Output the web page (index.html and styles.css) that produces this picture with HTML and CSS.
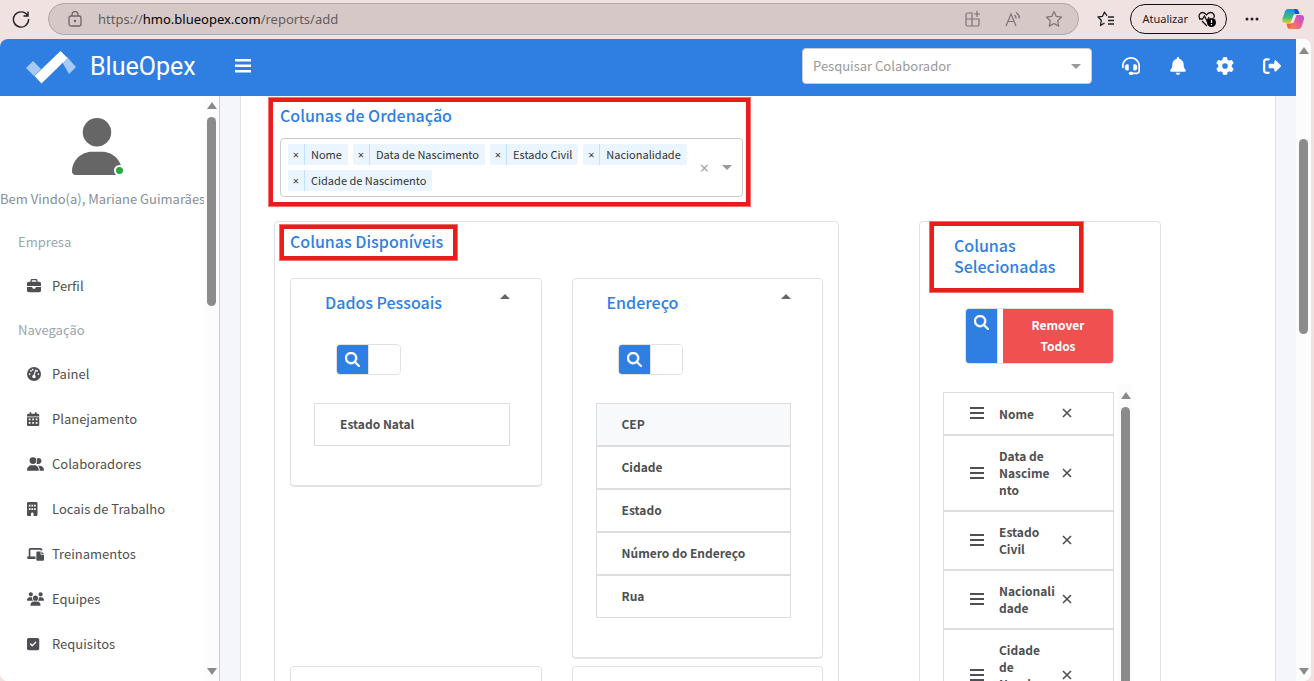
FILE: index.html
```html
<!DOCTYPE html>
<html lang="pt-BR">
<head>
  <meta charset="UTF-8" />
  <meta name="viewport" content="width=device-width, initial-scale=1.0"/>
  <title>BlueOpex</title>
  <link rel="stylesheet" href="styles.css">
</head>
<body>
  <!-- Shared icons -->
  <svg class="sprite" aria-hidden="true">
    <symbol id="search" viewBox="0 0 512 512"><path d="M416 208c0 45.900-14.900 88.300-40 122.700L502.600 457.400c12.500 12.500 12.500 32.800 0 45.300s-32.800 12.500-45.300 0L330.700 376c-34.400 25.200-76.800 40-122.700 40C93.100 416 0 322.900 0 208S93.100 0 208 0S416 93.100 416 208zM208 352a144 144 0 1 0 0-288 144 144 0 1 0 0 288z" stroke="currentColor" stroke-width="16"/></symbol>
    <symbol id="grip" viewBox="0 0 14 12"><path d="M0 0h14v2H0zM0 5h14v2H0zM0 10h14v2H0z"/></symbol>
    <symbol id="cross" viewBox="0 0 10 10"><path d="M1 1l8 8M9 1l-8 8" fill="none" stroke="currentColor" stroke-width="1.600"/></symbol>
  </svg>

  <!-- Browser toolbar -->
  <div class="browser-bar">
    <button class="tool" aria-label="Atualizar página">
      <svg width="18" height="18" viewBox="0 0 18 18" fill="none" stroke="#222" stroke-width="1.400"><path d="M15.500 5.500A7.600 7.600 0 1 0 16.600 9M16 1.500v4.500h-4.500"/></svg>
    </button>
    <div class="address">
      <svg width="14" height="16" viewBox="0 0 14 16" fill="none" stroke="#6f6665" stroke-width="1.300"><rect x="1" y="5" width="12" height="10" rx="2"/><path d="M4 5V3.500a3 3 0 0 1 6 0V5"/><circle cx="7" cy="10" r=".6" fill="#6f6665"/></svg>
      <span class="url">https://<b>hmo.blueopex.com</b>/reports/add</span>
      <span class="address-icons">
        <svg width="16" height="16" viewBox="0 0 16 16" fill="none" stroke="#7d7473" stroke-width="1.200"><path d="M7 2H2.500A1.500 1.500 0 0 0 1 3.500V8h6zM1 8v5.500A1.500 1.500 0 0 0 2.500 15H7V8zM7 8v7h5.500a1.500 1.500 0 0 0 1.500-1.500V8zM12 0v6M9 3h6"/></svg>
        <svg width="16" height="16" viewBox="0 0 16 16" fill="none" stroke="#7d7473" stroke-width="1.200"><path d="M1 15L6 3l5 12M3 10.500h6M9.500 4a4 4 0 0 1 1.500 3.500M11 1.500a7 7 0 0 1 3.500 6"/></svg>
        <svg width="18" height="18" viewBox="0 0 18 18" fill="none" stroke="#7d7473" stroke-width="1.200" stroke-linejoin="round"><path d="M9 1.500l2.300 4.900 5.300.7-3.900 3.700 1 5.300L9 13.500l-4.700 2.600 1-5.300L1.400 7.100l5.300-.7z"/></svg>
      </span>
    </div>
    <svg width="18" height="16" viewBox="0 0 18 16" fill="none" stroke="#222" stroke-width="1.300" stroke-linejoin="round"><path d="M10 5L7.500 1 5.500 5.300 1 6l3.300 3.300L3.500 14.500l4-2.500M11 6h6M11 9.500h6M11 13h6"/></svg>
    <button class="update">Atualizar
      <svg width="19" height="17" viewBox="0 0 19 17" fill="none" stroke="#111" stroke-width="1.300"><path d="M2 8C0 5 1.500 1.500 4.500 1.500 6.500 1.500 7.500 2.500 8.500 3.800c1-1.300 2-2.300 4-2.300C15.500 1.500 17 4.500 15.800 7M4 10l5 5M1 8h3.500L6.500 5l2.500 5 2-4"/><circle cx="13.500" cy="11.500" r="4.500" fill="#000" stroke="none"/><path d="M13.500 8.800v3.200M13.500 13v1.200" stroke="#fff"/></svg>
    </button>
    <svg width="14" height="4" viewBox="0 0 14 4" fill="#222"><circle cx="2" cy="2" r="1.500"/><circle cx="7" cy="2" r="1.500"/><circle cx="12" cy="2" r="1.500"/></svg>
    <svg class="assistant" width="22" height="20" viewBox="0 0 22 20">
      <defs>
        <linearGradient id="cool" x1="0" y1="0" x2="0" y2="1"><stop offset="0" stop-color="#1a8ff0"/><stop offset=".6" stop-color="#3bbf7a"/><stop offset="1" stop-color="#f3c52c"/></linearGradient>
        <linearGradient id="warm" x1="1" y1="0" x2="0" y2="1"><stop offset="0" stop-color="#a850f0"/><stop offset=".5" stop-color="#ee5b92"/><stop offset="1" stop-color="#f98a35"/></linearGradient>
      </defs>
      <path d="M6 0h8l-4 14H3c-3 0-3-3-2-6L3 2.500C3.500 1 4.500 0 6 0z" fill="url(#cool)"/>
      <path d="M12 0h2c1.500 0 2.300 1 3 3l.5 2H13z" fill="#1554c8"/>
      <path d="M12 6h7c3 0 3.500 3 2.500 6l-2 5.500c-.6 1.500-1.500 2.500-3 2.500H8z" fill="url(#warm)"/>
      <path d="M4.500 14.500H10L8 20c-1.500 0-2.500-1-3-3z" fill="#ef6540"/>
      <path d="M11.500 6h3l-3 8h-3z" fill="#f6e8ee"/>
    </svg>
  </div>

  <div class="window">
    <div class="app">
      <header class="topbar">
        <a class="brand" href="#">
          <svg width="50" height="33" viewBox="0 0 50 33"><path d="M0 17l7-7 8 8-7 7zM35 9l6-3 9 10-7 7z" fill="#a6c9f5"/><path d="M8.500 25L34.500 0l7 7-26 25.500z" fill="#fff"/></svg>
          <span>BlueOpex</span>
        </a>
        <button class="icon-button menu" aria-label="Menu">
          <svg width="16" height="14" viewBox="0 0 16 14"><path d="M0 0h16v2.400H0zM0 5.500h16v2.400H0zM0 11h16v2.400H0z"/></svg>
        </button>
        <div class="employee-search">
          <input type="text" aria-label="Pesquisar Colaborador" placeholder="Pesquisar Colaborador">
          <span class="caret down"></span>
        </div>
        <nav class="actions">
          <a href="#" aria-label="Suporte"><svg width="18" height="18" viewBox="0 0 512 512"><path d="M256 48C141.100 48 48 141.100 48 256v40c0 13.300-10.700 24-24 24s-24-10.700-24-24V256C0 114.600 114.600 0 256 0S512 114.600 512 256V400.100c0 48.600-39.400 88-88.100 88L313.600 488c-8.300 14.300-23.800 24-41.600 24H240c-26.500 0-48-21.500-48-48s21.500-48 48-48h32c17.800 0 33.300 9.700 41.600 24l110.400 .1c22.100 0 40-17.900 40-40V256c0-114.900-93.100-208-208-208zM144 208h16c17.700 0 32 14.300 32 32V352c0 17.700-14.300 32-32 32H144c-35.300 0-64-28.700-64-64V272c0-35.300 28.700-64 64-64zm224 0c35.300 0 64 28.700 64 64v48c0 35.300-28.700 64-64 64H352c-17.700 0-32-14.300-32-32V240c0-17.700 14.300-32 32-32h16z"/></svg></a>
          <a href="#" aria-label="Notificações"><svg width="18" height="18" viewBox="-32 0 512 512"><path d="M224 0c-17.700 0-32 14.300-32 32V51.200C119 66 64 130.600 64 208v18.800c0 47-17.300 92.400-48.500 127.600l-7.400 8.300c-8.400 9.400-10.400 22.900-5.300 34.400S19.400 416 32 416H416c12.600 0 24-7.400 29.200-18.900s3.100-25-5.300-34.400l-7.400-8.300C401.300 319.200 384 273.900 384 226.800V208c0-77.400-55-142-128-156.800V32c0-17.700-14.300-32-32-32zm45.300 493.300c12-12 18.700-28.300 18.700-45.300H160c0 17 6.700 33.300 18.700 45.300s28.300 18.700 45.300 18.700s33.300-6.700 45.300-18.700z"/></svg></a>
          <a href="#" aria-label="Configurações"><svg width="18" height="18" viewBox="0 0 512 512"><path d="M495.900 166.600c3.200 8.700 .5 18.400-6.400 24.600l-43.300 39.400c1.100 8.300 1.700 16.800 1.700 25.400s-.6 17.100-1.700 25.400l43.300 39.400c6.900 6.200 9.600 15.900 6.400 24.600c-4.400 11.900-9.700 23.300-15.800 34.300l-4.700 8.100c-6.600 11-14 21.400-22.100 31.200c-5.900 7.200-15.700 9.600-24.500 6.800l-55.700-17.700c-13.400 10.300-28.200 18.900-44 25.400l-12.500 57.100c-2 9.100-9 16.300-18.200 17.800c-13.800 2.300-28 3.500-42.500 3.500s-28.700-1.200-42.500-3.500c-9.200-1.500-16.200-8.700-18.200-17.800l-12.500-57.100c-15.800-6.500-30.600-15.100-44-25.400L83.100 425.900c-8.800 2.800-18.600 .3-24.500-6.800c-8.100-9.800-15.500-20.200-22.100-31.200l-4.700-8.100c-6.100-11-11.400-22.400-15.800-34.300c-3.200-8.700-.5-18.400 6.400-24.600l43.300-39.400C64.600 273.100 64 264.600 64 256s.6-17.100 1.700-25.400L22.400 191.200c-6.900-6.200-9.600-15.900-6.400-24.600c4.400-11.900 9.700-23.300 15.800-34.300l4.700-8.100c6.600-11 14-21.400 22.100-31.200c5.900-7.200 15.700-9.600 24.500-6.800l55.700 17.700c13.400-10.300 28.200-18.900 44-25.400l12.500-57.100c2-9.100 9-16.300 18.200-17.800C227.300 1.200 241.500 0 256 0s28.700 1.200 42.500 3.500c9.200 1.500 16.200 8.700 18.200 17.800l12.500 57.100c15.800 6.500 30.600 15.100 44 25.400l55.700-17.700c8.800-2.800 18.600-.3 24.500 6.800c8.100 9.800 15.500 20.200 22.100 31.200l4.700 8.100c6.100 11 11.400 22.400 15.800 34.300zM256 336a80 80 0 1 0 0-160 80 80 0 1 0 0 160z"/></svg></a>
          <a href="#" aria-label="Sair"><svg width="18" height="18" viewBox="0 0 512 512"><path d="M502.600 278.600c12.500-12.500 12.500-32.800 0-45.300l-128-128c-9.200-9.200-22.900-11.900-34.900-6.900S320 115.100 320 128v64H192c-17.700 0-32 14.300-32 32v64c0 17.700 14.300 32 32 32H320v64c0 12.900 7.800 24.600 19.800 29.600s25.700 2.200 34.900-6.900l128-128zM160 96c17.700 0 32-14.300 32-32s-14.300-32-32-32H96C43 32 0 75 0 128V384c0 53 43 96 96 96h64c17.700 0 32-14.300 32-32s-14.300-32-32-32H96c-17.700 0-32-14.300-32-32V128c0-17.700 14.300-32 32-32h64z"/></svg></a>
        </nav>
      </header>

      <div class="content">
        <aside class="sidebar">
          <div class="sidebar-body">
            <div class="avatar">
              <svg width="50" height="57" viewBox="0 0 448 512"><path d="M224 256A128 128 0 1 0 224 0a128 128 0 1 0 0 256zM178.300 304C79.800 304 0 383.800 0 482.300C0 498.700 13.300 512 29.700 512H418.300c16.400 0 29.700-13.300 29.700-29.700C448 383.800 368.200 304 269.700 304z"/></svg>
              <span class="online"></span>
            </div>
            <div class="greeting">Bem Vindo(a), Mariane Guimarães</div>
            <div class="nav-label">Empresa</div>
            <a class="nav-item" href="#"><svg viewBox="0 0 512 512"><path d="M184 48H328c4.400 0 8 3.600 8 8V96H176V56c0-4.400 3.600-8 8-8zm-56 8V96H64C28.700 96 0 124.700 0 160v96H512V160c0-35.300-28.700-64-64-64H384V56c0-30.900-25.100-56-56-56H184c-30.900 0-56 25.100-56 56zM512 288H320v32c0 17.700-14.300 32-32 32H224c-17.700 0-32-14.300-32-32V288H0V416c0 35.300 28.700 64 64 64H448c35.300 0 64-28.700 64-64V288z"/></svg>Perfil</a>
            <div class="nav-label">Navegação</div>
            <a class="nav-item" href="#"><svg viewBox="0 0 512 512"><path fill-rule="evenodd" d="M0 256a256 256 0 1 1 512 0A256 256 0 1 1 0 256zm320 96c0-26.900-16.500-49.900-40-59.300l58-173c4-14-3-24-13-27s-22 2-26 14l-57 177c-28 6-50 34-50 68 0 35 29 64 64 64s64-29 64-64zM144 176a32 32 0 1 0 0-64 32 32 0 1 0 0 64zm-16 80a32 32 0 1 0-64 0 32 32 0 1 0 64 0zm288 32a32 32 0 1 0 0-64 32 32 0 1 0 0 64zM240 96a32 32 0 1 0-64 0 32 32 0 1 0 64 0zm160 48a32 32 0 1 0-64 0 32 32 0 1 0 64 0z"/></svg>Painel</a>
            <a class="nav-item" href="#"><svg viewBox="0 0 512 512"><path fill-rule="evenodd" d="M128 0c17.700 0 32 14.300 32 32V64H288V32c0-17.700 14.300-32 32-32s32 14.300 32 32V64h48c26.500 0 48 21.500 48 48v48H0V112C0 85.500 21.500 64 48 64H96V32c0-17.700 14.300-32 32-32zM0 192H448V464c0 26.500-21.500 48-48 48H48c-26.500 0-48-21.500-48-48V192zM64 240v64h64v-64zM192 240v64h64v-64zM320 240v64h64v-64zM64 368v64h64v-64zM192 368v64h64v-64zM320 368v64h64v-64z"/></svg>Planejamento</a>
            <a class="nav-item" href="#"><svg viewBox="0 0 640 512"><path d="M96 128a128 128 0 1 1 256 0A128 128 0 1 1 96 128zM0 482.300C0 383.800 79.800 304 178.300 304h91.400C368.200 304 448 383.800 448 482.300c0 16.400-13.300 29.700-29.700 29.700H29.700C13.300 512 0 498.700 0 482.300zM609.300 512H471.400c5.400-9.400 8.600-20.300 8.600-32v-8c0-60.700-27.100-115.200-69.800-151.800c2.400-.1 4.700-.2 7.100-.2h61.400C567.800 320 640 392.200 640 481.300c0 17-13.800 30.700-30.700 30.700zM432 256c-31 0-59-12.600-79.300-32.900C372.400 196.500 384 163.600 384 128c0-26.800-6.600-52.100-18.300-74.300C384.300 40.100 407.200 32 432 32c61.900 0 112 50.100 112 112s-50.100 112-112 112z"/></svg>Colaboradores</a>
            <a class="nav-item" href="#"><svg viewBox="0 0 512 512"><path fill-rule="evenodd" d="M48 0C21.500 0 0 21.500 0 48V464c0 26.500 21.500 48 48 48h96V432c0-26.500 21.500-48 48-48s48 21.500 48 48v80h96c26.500 0 48-21.500 48-48V48c0-26.500-21.500-48-48-48zM64 224h64v64H64zM160 224h64v64h-64zM256 224h64v64h-64zM64 96h64v64H64zM160 96h64v64h-64zM256 96h64v64h-64z"/></svg>Locais de Trabalho</a>
            <a class="nav-item" href="#"><svg viewBox="0 0 640 512"><path d="M128 32C92.700 32 64 60.700 64 96V352H19c-11 0-19 9-19 19 0 43 34 77 77 77H320V352H128V96H512v32h64V96c0-35.300-28.700-64-64-64zM400 160c-26.500 0-48 21.500-48 48V464c0 26.500 21.500 48 48 48H592c26.500 0 48-21.500 48-48V288H544c-17.700 0-32-14.300-32-32V160zM544 160v96h96z"/></svg>Treinamentos</a>
            <a class="nav-item" href="#"><svg viewBox="0 0 640 512"><path d="M144 0a80 80 0 1 1 0 160A80 80 0 1 1 144 0zM512 0a80 80 0 1 1 0 160A80 80 0 1 1 512 0zM0 298.700C0 239.800 47.800 192 106.700 192h42.700c15.900 0 31 3.500 44.600 9.700c-1.300 7.200-1.900 14.700-1.900 22.300c0 38.200 16.800 72.500 43.300 96H21.300C9.600 320 0 310.400 0 298.700zM405.300 320H404.700c26.600-23.500 43.300-57.800 43.300-96c0-7.600-.7-15-1.900-22.300c13.600-6.300 28.700-9.700 44.600-9.700h42.700C592.200 192 640 239.800 640 298.700c0 11.800-9.600 21.300-21.300 21.300zM224 224a96 96 0 1 1 192 0 96 96 0 1 1-192 0zM128 485.300C128 411.700 187.700 352 261.300 352H378.700C452.300 352 512 411.700 512 485.300c0 14.700-11.900 26.700-26.700 26.700H154.700c-14.700 0-26.700-11.900-26.700-26.700z"/></svg>Equipes</a>
            <a class="nav-item" href="#"><svg viewBox="0 0 512 512"><path fill-rule="evenodd" d="M64 32C28.700 32 0 60.700 0 96V416c0 35.300 28.700 64 64 64H384c35.300 0 64-28.700 64-64V96c0-35.300-28.700-64-64-64zM337 209L209 337c-9.400 9.400-24.600 9.400-33.900 0l-64-64c-9.400-9.400-9.400-24.600 0-33.900s24.600-9.400 33.900 0l47 47L303 175c9.400-9.400 24.600-9.400 33.900 0s9.400 24.600 0 33.900z"/></svg>Requisitos</a>
          </div>
          <div class="scrollbar"><span class="arrow up"></span><span class="thumb side-thumb"></span><span class="arrow down"></span></div>
        </aside>

        <main class="main">
          <div class="panel">
            <!-- Sort columns -->
            <section class="sorting">
              <h2>Colunas de Ordenação</h2>
              <div class="multi-select">
                <div class="tags">
                  <span class="tag"><button aria-label="Remover Nome">×</button><span>Nome</span></span>
                  <span class="tag"><button aria-label="Remover Data de Nascimento">×</button><span>Data de Nascimento</span></span>
                  <span class="tag"><button aria-label="Remover Estado Civil">×</button><span>Estado Civil</span></span>
                  <span class="tag"><button aria-label="Remover Nacionalidade">×</button><span>Nacionalidade</span></span>
                  <span class="tag"><button aria-label="Remover Cidade de Nascimento">×</button><span>Cidade de Nascimento</span></span>
                </div>
                <button class="clear" aria-label="Limpar">×</button>
                <span class="caret down"></span>
              </div>
              <span class="highlight highlight-sorting"></span>
            </section>

            <div class="columns">
              <!-- Available columns -->
              <section class="card available">
                <h2>Colunas Disponíveis</h2>
                <span class="highlight highlight-available"></span>
                <div class="groups">
                  <div class="card group">
                    <div class="group-title"><h2>Dados Pessoais</h2><button class="toggle" aria-label="Recolher"><span class="caret up"></span></button></div>
                    <div class="search-box">
                      <button aria-label="Buscar"><svg><use href="#search"/></svg></button>
                      <input type="text" aria-label="Buscar em Dados Pessoais">
                    </div>
                    <ul class="items">
                      <li>Estado Natal</li>
                    </ul>
                  </div>
                  <div class="card group">
                    <div class="group-title"><h2>Endereço</h2><button class="toggle" aria-label="Recolher"><span class="caret up"></span></button></div>
                    <div class="search-box">
                      <button aria-label="Buscar"><svg><use href="#search"/></svg></button>
                      <input type="text" aria-label="Buscar em Endereço">
                    </div>
                    <ul class="items">
                      <li class="active">CEP</li>
                      <li>Cidade</li>
                      <li>Estado</li>
                      <li>Número do Endereço</li>
                      <li>Rua</li>
                    </ul>
                  </div>
                  <div class="card group empty"></div>
                  <div class="card group empty"></div>
                </div>
              </section>

              <!-- Selected columns -->
              <section class="card selected">
                <h2>Colunas Selecionadas</h2>
                <span class="highlight highlight-selected"></span>
                <div class="search-box selected-search">
                  <button aria-label="Buscar"><svg><use href="#search"/></svg></button>
                  <input type="text" aria-label="Buscar em Colunas Selecionadas">
                  <button class="remove-all">Remover Todos</button>
                </div>
                <div class="selected-scroll">
                  <ul class="items selected-items">
                    <li><svg class="grip"><use href="#grip"/></svg><span>Nome</span><button aria-label="Remover"><svg><use href="#cross"/></svg></button></li>
                    <li><svg class="grip"><use href="#grip"/></svg><span>Data de Nascimento</span><button aria-label="Remover"><svg><use href="#cross"/></svg></button></li>
                    <li><svg class="grip"><use href="#grip"/></svg><span>Estado Civil</span><button aria-label="Remover"><svg><use href="#cross"/></svg></button></li>
                    <li><svg class="grip"><use href="#grip"/></svg><span>Nacionalidade</span><button aria-label="Remover"><svg><use href="#cross"/></svg></button></li>
                    <li><svg class="grip"><use href="#grip"/></svg><span>Cidade de Nascimento</span><button aria-label="Remover"><svg><use href="#cross"/></svg></button></li>
                  </ul>
                  <div class="scrollbar"><span class="arrow up"></span><span class="thumb list-thumb"></span></div>
                </div>
              </section>
            </div>
          </div>
        </main>
      </div>
    </div>
    <div class="scrollbar page-scrollbar"><span class="arrow up"></span><span class="thumb page-thumb"></span><span class="arrow down"></span></div>
  </div>
</body>
</html>
```
FILE: styles.css
```css
* {
  box-sizing: border-box;
}

body {
  margin: 0;
  height: 100vh;
  display: flex;
  flex-direction: column;
  overflow: hidden;
  background-color: #f0e2e1;
  color: #4d4f52;
  font-family: "Noto Sans CJK SC", "Open Sans", sans-serif;
  font-size: 13px;
  line-height: 20px;
}

button {
  border: 0;
  padding: 0;
  background: none;
  color: inherit;
  font: inherit;
  cursor: pointer;
}

svg {
  display: block;
  flex: none;
}

svg:not([fill]) {
  fill: currentColor;
}

a {
  color: inherit;
  text-decoration: none;
}

h2 {
  margin: 0;
  color: #2f7fe2;
  font-size: 16px;
  font-weight: 500;
  line-height: 21px;
}

ul {
  list-style: none;
  margin: 0;
  padding: 0;
}

.sprite {
  position: absolute;
  width: 0;
  height: 0;
}

/* Browser toolbar */
.browser-bar {
  flex: none;
  display: flex;
  align-items: center;
  height: 38px;
  margin-bottom: 1px;
  padding: 0 10px 0 12px;
  gap: 18px;
  font-family: "Noto Sans", sans-serif;
}

.address {
  flex: 1;
  display: flex;
  align-items: center;
  gap: 16px;
  height: 32px;
  padding: 0 15px 0 19px;
  border: 1px solid #b5a5a4;
  border-radius: 16px;
  background-color: #d6c8c7;
}

.url {
  font-size: 13px;
  color: #655c5b;
}

.url b {
  color: #000;
  font-weight: 400;
}

.address-icons {
  display: flex;
  align-items: center;
  gap: 24px;
  margin-left: auto;
}

.update {
  display: flex;
  align-items: center;
  gap: 10px;
  height: 30px;
  margin-left: -3px;
  padding: 0 9px 0 11px;
  border: 1px solid #111;
  border-radius: 15px;
  color: #222;
  font-size: 11px;
}

.assistant {
  margin-left: 5px;
}

/* Window */
.window {
  flex: 1;
  min-height: 0;
  display: flex;
  margin-right: 3px;
  border-radius: 8px;
  overflow: hidden;
  background-color: #fcfcfc;
}

.app {
  flex: 1;
  min-width: 0;
  display: flex;
  flex-direction: column;
}

.topbar {
  flex: none;
  display: flex;
  align-items: center;
  height: 57px;
  padding: 0 15px 3px 26px;
  background-color: #2f7fe2;
  color: #fff;
}

.brand {
  display: flex;
  align-items: center;
  gap: 14px;
  padding-top: 2px;
  font-family: Roboto, sans-serif;
  font-size: 25px;
  line-height: 30px;
}

.menu {
  margin-left: 39px;
}

.employee-search {
  display: flex;
  align-items: center;
  width: 290px;
  height: 36px;
  margin-left: auto;
  padding: 0 10px;
  border: 1px solid #ccc;
  border-radius: 4px;
  background-color: #fff;
}

.employee-search input {
  flex: 1;
  min-width: 0;
  padding: 0;
  border: 0;
  outline: 0;
  color: #4d4f52;
  font: inherit;
}

.employee-search input::placeholder {
  color: #999;
}

.actions {
  display: flex;
  gap: 29px;
  margin-left: 30px;
}

.caret {
  flex: none;
  border: 5px solid transparent;
}

.caret.down {
  border-top-color: #999;
  border-bottom-width: 0;
}

.caret.up {
  border-bottom-color: #666;
  border-top-width: 0;
}

.content {
  flex: 1;
  min-height: 0;
  display: flex;
  background-color: #f4f6fb;
}

/* Sidebar */
.sidebar {
  flex: none;
  display: flex;
  width: 220px;
  border-right: 1px solid #ccc;
  background-color: #fff;
}

.sidebar-body {
  flex: 1;
  min-width: 0;
}

.avatar {
  position: relative;
  width: 50px;
  margin: 22px auto 0 72px;
  color: #666;
}

.online {
  position: absolute;
  right: -3px;
  bottom: -1px;
  width: 11px;
  height: 11px;
  border: 2px solid #fff;
  border-radius: 50%;
  background-color: #28a745;
}

.greeting {
  margin-top: 14px;
  color: #868e96;
  white-space: nowrap;
}

.nav-label {
  height: 43px;
  padding-left: 18px;
  color: #98a6ad;
  line-height: 43px;
}

.greeting + .nav-label {
  margin-top: 11px;
}

.nav-item {
  display: flex;
  align-items: center;
  height: 45px;
  padding-left: 27px;
  gap: 8px;
}

.nav-item svg {
  width: 17px;
  height: 14px;
}

.nav-item svg[viewBox="0 0 512 512"] {
  width: 14px;
  margin-right: 3px;
}

/* Scrollbars */
.scrollbar {
  flex: none;
  display: flex;
  flex-direction: column;
  align-items: center;
  width: 15px;
  padding: 6px 0;
  background-color: #fcfcfc;
}

.arrow {
  flex: none;
  border: 5px solid transparent;
}

.arrow.up {
  border-top-width: 0;
  border-bottom: 7px solid #8b8b8b;
}

.arrow.down {
  margin-top: auto;
  border-bottom-width: 0;
  border-top: 7px solid #8b8b8b;
}

.thumb {
  width: 9px;
  margin-top: 8px;
  border-radius: 5px;
  background-color: #8b8b8b;
}

.side-thumb {
  height: 33%;
}

.page-thumb {
  height: 31%;
  margin-top: 85px;
}

.page-scrollbar {
  padding-top: 8px;
}

/* Report form */
.main {
  flex: 1;
  min-width: 0;
  padding: 0 20px;
  overflow: hidden;
}

.panel {
  padding: 9px 114px 0 33px;
  border: 1px solid #dee2e6;
  border-width: 0 1px;
  background-color: #fff;
}

.sorting {
  position: relative;
  width: 463px;
  margin-left: 6px;
}

.multi-select {
  display: flex;
  align-items: center;
  min-height: 59px;
  margin-top: 12px;
  padding: 5px 10px 5px 7px;
  border: 1px solid #ccc;
  border-radius: 4px;
}

.tags {
  flex: 1;
  display: flex;
  flex-wrap: wrap;
  gap: 5px;
}

.tag {
  display: flex;
  height: 21px;
  border-radius: 2px;
  background-color: #ebf5ff;
  color: #333;
  font-size: 11px;
  line-height: 20px;
}

.tag button {
  width: 17px;
  border-right: 1px solid #c2e0ff;
  font-family: "Open Sans", sans-serif;
}

.tag > span {
  padding: 0 6px;
}

.clear {
  margin-right: 13px;
  color: #999;
  font-family: "Open Sans", sans-serif;
  font-size: 16px;
}

.highlight {
  position: absolute;
  border: 4px solid #ea1c1c;
  outline: 1px solid #f07070;
  pointer-events: none;
}

.highlight-sorting {
  top: -7px;
  right: -7px;
  bottom: -9px;
  left: -11px;
}

.highlight-available {
  top: 3px;
  left: 5px;
  width: 177px;
  height: 35px;
}

.highlight-selected {
  top: 0;
  left: 10px;
  width: 153px;
  height: 70px;
}

.columns {
  display: grid;
  grid-template-columns: 565fr 242fr;
  gap: 80px;
  margin-top: 24px;
}

.card {
  border: 1px solid #dee2e6;
  border-radius: 4px;
  background-color: #fff;
}

.available {
  position: relative;
  padding: 9px 15px;
}

.groups {
  display: grid;
  grid-template-columns: 1fr 1fr;
  align-items: start;
  gap: 8px 30px;
  margin-top: 26px;
}

.group {
  padding: 13px 31px 39px 23px;
  box-shadow: 0 1px 1px rgba(0, 0, 0, 0.1);
}

.group.empty {
  min-height: 200px;
}

.group-title {
  display: flex;
  justify-content: space-between;
  align-items: flex-start;
  padding-left: 11px;
}

.toggle {
  height: 8px;
}

.toggle .caret {
  display: block;
}

.search-box {
  display: flex;
  width: 65px;
  min-height: 31px;
  margin: 31px 0 28px 22px;
  border: 1px solid #dee2e6;
  border-radius: 4px;
  overflow: hidden;
}

.search-box button {
  flex: none;
  width: 31px;
  background-color: #2f7fe2;
  color: #fff;
}

.search-box svg {
  width: 15px;
  height: 15px;
  margin: 0 auto;
}

.search-box input {
  flex: 1;
  min-width: 0;
  padding: 0;
  border: 0;
  border-left: 1px solid #dee2e6;
}

.items li {
  height: 43px;
  padding: 0 25px;
  border: 1px solid #ddd;
  font-size: 12px;
  font-weight: 700;
  line-height: 39px;
}

.items .active {
  background-color: #f8f9fa;
}

.selected {
  position: relative;
  padding: 13px 23px 0;
}

.selected h2 {
  width: 110px;
  margin-left: 11px;
}

.search-box.selected-search {
  width: 149px;
  margin: 31px 0 20px 22px;
}

.selected-search > button:first-child {
  display: flex;
  padding-top: 6px;
}

.search-box .remove-all {
  width: 110px;
  padding: 5px 20px 7px;
  background-color: #f05050;
  font-size: 12px;
  font-weight: 700;
  line-height: 21px;
}

.selected-scroll {
  display: flex;
  gap: 4px;
  margin-right: 4px;
}

.selected-items {
  flex: 1;
  min-width: 0;
  padding-top: 8px;
}

.selected-items li {
  display: flex;
  align-items: center;
  height: auto;
  min-height: 43px;
  padding: 11px 0 12px 26px;
  line-height: 17px;
}

.grip {
  width: 14px;
  height: 12px;
  margin-right: 15px;
}

.selected-items li span {
  width: 58px;
  margin-right: 5px;
  overflow-wrap: anywhere;
}

.selected-items li button svg {
  width: 10px;
  height: 10px;
}

.selected-scroll .scrollbar {
  padding-top: 8px;
}

.list-thumb {
  flex: 1;
}
```
